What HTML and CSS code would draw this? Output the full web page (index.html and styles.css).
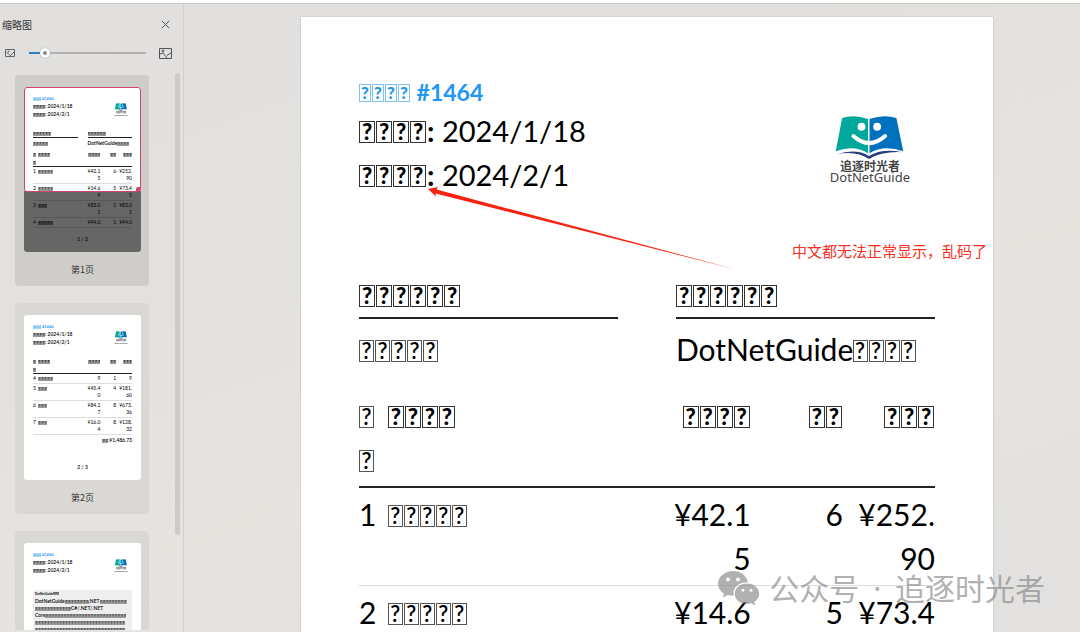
FILE: index.html
```html
<!DOCTYPE html>
<html lang="zh-CN">
<head>
  <meta charset="UTF-8">
  <meta name="viewport" content="width=device-width, initial-scale=1.0">
  <title>缩略图</title>
  <link rel="stylesheet" href="styles.css">
</head>
<body>

<svg class="defs" aria-hidden="true">
  <symbol id="book" viewBox="0 0 72 46">
    <path d="M7.500 3Q20-1 34 4V39Q20 30 1 37Z" fill="#00a79b"/>
    <path d="M35.500 4Q50-1 63 3L70 37Q50 30 35.500 39Z" fill="#0071bf"/>
    <circle cx="27.300" cy="12" r="4" fill="#fff"/>
    <circle cx="43.300" cy="12" r="4" fill="#fff"/>
    <path d="M19 21.500Q35 36 51.500 21.500" fill="none" stroke="#fff" stroke-width="4" stroke-linecap="round"/>
    <path d="M2 40Q22 34 35 42Q48 34 69 38Q48 37 35 45Q22 36 2 40Z" fill="#27407c"/>
  </symbol>
</svg>

<div class="viewer">
  <aside class="panel">
    <div class="panel-title">
      <span>缩略图</span>
      <button class="close" aria-label="关闭">
        <svg width="9" height="9" viewBox="0 0 9 9"><path d="M.8.8l7.400 7.400M8.200.8L.8 8.200" stroke="#555" fill="none"/></svg>
      </button>
    </div>
    <div class="zoom-bar">
      <svg width="10" height="8" viewBox="0 0 10 8" fill="none" stroke="#666"><path d="M.5.5h9v7h-9zM1.500 3.500L6 7M6 6l3-3"/><circle cx="3.500" cy="2.500" r=".5"/></svg>
      <input type="range" min="0" max="100" value="10" aria-label="缩放">
      <svg width="13" height="11" viewBox="0 0 13 11" fill="none" stroke="#555"><path d="M.5.5h12v10h-12zM1 6l3-1 4 5M8 7.500l4.500-3"/><circle cx="4" cy="3" r="1"/></svg>
    </div>

    <div class="thumbs">
      <div class="card active">
        <div class="sheet mini">
          <div class="head">
            <div>
              <div class="title"><span class="tofu">????</span> #1464</div>
              <div class="date"><b><span class="tofu">????</span>:</b> 2024/1/18</div>
              <div class="date"><b><span class="tofu">????</span>:</b> 2024/2/1</div>
            </div>
            <div class="logo"><svg><use href="#book"/></svg><span class="cn">追逐时光者</span><span class="en">DotNetGuide</span></div>
          </div>
          <div class="parties">
            <div><div class="party"><b class="tofu">??????</b></div><div class="name"><span class="tofu">?????</span></div></div>
            <div><div class="party"><b class="tofu">??????</b></div><div class="name">DotNetGuide<span class="tofu">????</span></div></div>
          </div>
          <table>
            <thead>
              <tr><th class="no"><span class="tofu">?</span><br><span class="tofu">?</span></th><th><b class="tofu">????</b></th><th class="num"><b class="tofu">????</b></th><th class="num"><b class="tofu">??</b></th><th class="num"><b class="tofu">???</b></th></tr>
            </thead>
            <tbody>
              <tr><td>1</td><td><span class="tofu">?????</span></td><td class="num">¥42.1<br>5</td><td class="num">6</td><td class="num">¥252.<br>90</td></tr>
              <tr><td>2</td><td><span class="tofu">?????</span></td><td class="num">¥14.6<br>9</td><td class="num">5</td><td class="num">¥73.4<br>5</td></tr>
              <tr><td>3</td><td><span class="tofu">???</span></td><td class="num">¥83.0<br>1</td><td class="num">1</td><td class="num">¥83.0<br>1</td></tr>
              <tr><td>4</td><td><span class="tofu">?????</span></td><td class="num">¥94.0</td><td class="num">1</td><td class="num">¥94.0</td></tr>
            </tbody>
          </table>
          <div class="page-no">1 / 3</div>
          <div class="shade"></div>
          <div class="view-box"></div>
        </div>
        <a class="label" href="#p1">第1页</a>
      </div>

      <div class="card">
        <div class="sheet mini">
          <div class="head">
            <div>
              <div class="title"><span class="tofu">????</span> #1464</div>
              <div class="date"><b><span class="tofu">????</span>:</b> 2024/1/18</div>
              <div class="date"><b><span class="tofu">????</span>:</b> 2024/2/1</div>
            </div>
            <div class="logo"><svg><use href="#book"/></svg><span class="cn">追逐时光者</span><span class="en">DotNetGuide</span></div>
          </div>
          <table class="next">
            <thead>
              <tr><th class="no"><span class="tofu">?</span><br><span class="tofu">?</span></th><th><b class="tofu">????</b></th><th class="num"><b class="tofu">????</b></th><th class="num"><b class="tofu">??</b></th><th class="num"><b class="tofu">???</b></th></tr>
            </thead>
            <tbody>
              <tr><td>4</td><td><span class="tofu">?????</span></td><td class="num">9</td><td class="num">1</td><td class="num">9</td></tr>
              <tr><td>5</td><td><span class="tofu">???</span></td><td class="num">¥45.4<br>0</td><td class="num">4</td><td class="num">¥181.<br>60</td></tr>
              <tr><td>6</td><td><span class="tofu">???</span></td><td class="num">¥84.1<br>7</td><td class="num">8</td><td class="num">¥673.<br>36</td></tr>
              <tr><td>7</td><td><span class="tofu">???</span></td><td class="num">¥16.0<br>4</td><td class="num">8</td><td class="num">¥128.<br>32</td></tr>
            </tbody>
          </table>
          <div class="total"><span class="tofu">??</span>:¥1,486.73</div>
          <div class="page-no">2 / 3</div>
        </div>
        <a class="label" href="#p2">第2页</a>
      </div>

      <div class="card">
        <div class="sheet mini">
          <div class="head">
            <div>
              <div class="title"><span class="tofu">????</span> #1464</div>
              <div class="date"><b><span class="tofu">????</span>:</b> 2024/1/18</div>
              <div class="date"><b><span class="tofu">????</span>:</b> 2024/2/1</div>
            </div>
            <div class="logo"><svg><use href="#book"/></svg><span class="cn">追逐时光者</span><span class="en">DotNetGuide</span></div>
          </div>
          <div class="comments">
            <div class="comments-title">DotNetGuide<span class="tofu">???</span></div>
            <div>DotNetGuide<span class="tofu">????????</span>.NET<span class="tofu">?????????</span></div>
            <div><span class="tofu">????????????</span>C#/.NET/.NET</div>
            <div>Core<span class="tofu">???????????????????????????</span></div>
            <div><span class="tofu">??????????????????????????????</span></div>
            <div><span class="tofu">??????????????????????????????</span></div>
          </div>
        </div>
      </div>
    </div>
    <div class="scroll"></div>
  </aside>

  <main class="stage">
    <article class="sheet" id="p1">
      <div class="head">
        <div>
          <div class="title"><span class="tofu">????</span> #1464</div>
          <div class="date"><b><span class="tofu">????</span>:</b> 2024/1/18</div>
          <div class="date"><b><span class="tofu">????</span>:</b> 2024/2/1</div>
        </div>
        <div class="logo"><svg><use href="#book"/></svg><span class="cn">追逐时光者</span><span class="en">DotNetGuide</span></div>
      </div>
      <div class="parties">
        <div><div class="party"><b class="tofu">??????</b></div><div class="name"><span class="tofu">?????</span></div></div>
        <div><div class="party"><b class="tofu">??????</b></div><div class="name">DotNetGuide<span class="tofu">????</span></div></div>
      </div>
      <table>
        <thead>
          <tr><th class="no"><span class="tofu">?</span><br><span class="tofu">?</span></th><th><b class="tofu">????</b></th><th class="num"><b class="tofu">????</b></th><th class="num"><b class="tofu">??</b></th><th class="num"><b class="tofu">???</b></th></tr>
        </thead>
        <tbody>
          <tr><td>1</td><td><span class="tofu">?????</span></td><td class="num">¥42.1<br>5</td><td class="num">6</td><td class="num">¥252.<br>90</td></tr>
          <tr><td>2</td><td><span class="tofu">?????</span></td><td class="num">¥14.6</td><td class="num">5</td><td class="num">¥73.4</td></tr>
        </tbody>
      </table>
    </article>

    <svg class="arrow" width="308" height="84" viewBox="0 0 308 84">
      <path d="M0 2L10 0 8.500 2.500 308 82.500 7.500 6.500 8 9.500Z" fill="#f9210f"/>
    </svg>
    <div class="note">中文都无法正常显示，乱码了</div>
    <div class="watermark">
      <svg width="42" height="34" viewBox="0 0 42 34">
        <path fill="currentColor" fill-rule="evenodd" d="M15.500 0C7 0 0 5.600 0 12.700c0 4 2.200 7.500 5.900 9.900L4.800 26.500l5-2.600c1.800.5 4 .9 6 .8C14 17.500 20 11.200 30 11.300 28.500 4.500 22.500 0 15.500 0ZM10 6.500a2 2 0 1 1 0 4 2 2 0 0 1 0-4Zm10 0a2 2 0 1 1 0 4 2 2 0 0 1 0-4Z"/>
        <path fill="currentColor" fill-rule="evenodd" d="M29 12.500c-7 0-12.300 4.600-12.300 10.200S22 32.900 29 32.900c1.500 0 3-.2 4.300-.6l4 2.200-1.100-3.600c3-1.900 5-4.800 5-8.200 0-5.600-5.200-10.200-12.200-10.200Zm-4 5.200a1.500 1.500 0 1 1 0 3 1.500 1.500 0 0 1 0-3Zm8 0a1.500 1.500 0 1 1 0 3 1.500 1.500 0 0 1 0-3Z"/>
      </svg>
      <div>公众号<span class="dot"> · </span>追逐时光者</div>
    </div>
  </main>
</div>

<script src="script.js"></script>
</body>
</html>
```

FILE: styles.css
```css
* {
  box-sizing: border-box;
}

body {
  margin: 0;
  height: 100vh;
  overflow: hidden;
  font-family: "Noto Sans", "Noto Sans CJK SC", sans-serif;
  color: #333;
  background: linear-gradient(160deg, #e1e0df 0%, #e3e1de 35%, #e7e3df 60%, #e2e1e0 100%);
  border-top: 3px solid #fff;
}

.defs {
  position: absolute;
  width: 0;
  height: 0;
}

.viewer {
  display: flex;
  height: 100%;
  border-top: 1px solid #c9c9c8;
}

/* panel de miniaturas */
.panel {
  position: relative;
  flex: none;
  width: 184px;
  display: flex;
  flex-direction: column;
  border-right: 1px solid #d3d1cf;
}

.panel-title {
  display: flex;
  justify-content: space-between;
  align-items: center;
  height: 40px;
  padding: 0 12px 0 2px;
  font-family: "Noto Sans CJK SC", sans-serif;
  font-size: 10px;
}

.close {
  display: flex;
  padding: 1px;
  border: none;
  background: none;
}

.zoom-bar {
  display: flex;
  align-items: center;
  height: 18px;
  padding: 0 11px 0 5px;
}

.zoom-bar input {
  -webkit-appearance: none;
  appearance: none;
  flex: 1;
  min-width: 0;
  height: 2px;
  margin: 0 13px 0 14px;
  background: linear-gradient(to right, #2a7dc0 14%, #b3b2b0 14%);
}

.zoom-bar input::-webkit-slider-thumb {
  -webkit-appearance: none;
  width: 10px;
  height: 10px;
  border: 3px solid #fff;
  border-radius: 50%;
  background: #8c8c8c;
  box-shadow: 0 0 1px #777;
}

.thumbs {
  flex: 1;
  display: flex;
  flex-direction: column;
  gap: 17px;
  overflow: hidden;
  margin: 13px 34px 2px 15px;
}

.card {
  flex: none;
  display: flex;
  flex-direction: column;
  padding: 12px 8px 8px 9px;
  border-radius: 4px;
  background: #dad8d5;
}

.card.active {
  background: #cfcdca;
}

.label {
  padding-top: 9px;
  font-family: "Noto Sans CJK SC", sans-serif;
  font-size: 9px;
  line-height: 17px;
  text-align: center;
  text-decoration: none;
  color: #333;
}

.scroll {
  position: absolute;
  top: 69px;
  right: 3px;
  width: 5px;
  height: 462px;
  border-radius: 3px;
  background: #cdcbc9;
}

/* documento */
.stage {
  position: relative;
  flex: 1;
  overflow: hidden;
  padding: 13px 87px 0 117px;
}

.sheet {
  min-height: 100%;
  padding: 58px;
  background: #fff;
  box-shadow: 0 0 2px #bbb;
  font-family: Lato, sans-serif;
  font-size: 30px;
  line-height: 44px;
  color: #000;
}

.head {
  display: flex;
  justify-content: space-between;
}

.title {
  font-size: 23px;
  font-weight: bold;
  line-height: 34px;
  color: #2196f3;
}

.date {
  font-size: 29px;
}

.logo {
  display: flex;
  flex-direction: column;
  align-items: center;
  margin: 40px 25px 0 0;
  font-family: "Noto Sans", sans-serif;
  font-size: 13px;
  line-height: 12px;
  color: #444;
}

.logo svg {
  width: 72px;
  height: 45px;
}

.logo .cn {
  font-family: "Noto Sans CJK SC", sans-serif;
  font-size: 12px;
  font-weight: bold;
  line-height: 11px;
}

.tofu i {
  display: inline-block;
  width: 15px;
  height: 22px;
  margin-right: 1px;
  border: 1px solid #555;
  font-size: 22px;
  font-style: normal;
  font-weight: 600;
  line-height: 20px;
  text-align: center;
  vertical-align: 2px;
}

b .tofu i,
b.tofu i {
  width: 16px;
  border-color: #333;
  font-weight: 900;
}

.title .tofu i {
  width: 12px;
  height: 18px;
  border-color: #7cc0f8;
  font-size: 17px;
  font-weight: 900;
  line-height: 16px;
  vertical-align: 2px;
}

.parties {
  display: grid;
  grid-template-columns: 1fr 1fr;
  gap: 58px;
  margin-top: 75px;
}

.party {
  padding-bottom: 1px;
  border-bottom: 2px solid #222;
}

.name {
  margin-top: 8px;
}

table {
  width: 100%;
  margin-top: 22px;
  table-layout: fixed;
  border-collapse: collapse;
}

th,
td {
  padding: 4px 0 5px;
  border-bottom: 1px solid #ddd;
  font-weight: normal;
  text-align: left;
  vertical-align: top;
}

th {
  padding: 0 0 5px;
  border-bottom: 2px solid #222;
}

th.no {
  width: 5%;
}

th.num {
  width: 16%;
}

.num {
  text-align: right;
}

/* hojas en miniatura */
.mini {
  position: relative;
  display: flex;
  flex-direction: column;
  height: 165px;
  min-height: 0;
  padding: 9px;
  border-radius: 3px;
  box-shadow: none;
  font-size: 5px;
  font-weight: 600;
  line-height: 8px;
}

.mini .title {
  font-size: 4px;
  line-height: 6px;
}

.mini .date {
  font-size: 5px;
}

.mini .logo {
  margin: 7px 4px 0 0;
  font-size: 2px;
  line-height: 3px;
}

.mini .logo svg {
  width: 14px;
  height: 8px;
}

.mini .logo .cn {
  font-size: 2px;
  line-height: 3px;
}

.mini .tofu i {
  width: 3px;
  height: 4px;
  margin: 0;
  border: none;
  background: #999;
  font-size: 4px;
  line-height: 4px;
  vertical-align: 0;
}

.mini .title .tofu i {
  width: 2px;
  height: 3px;
  background: #a6d5fa;
  font-size: 3px;
  line-height: 3px;
}

.mini .parties {
  gap: 10px;
  margin-top: 12px;
}

.mini .party,
.mini .name {
  line-height: 7px;
}

.mini .party {
  padding: 0;
  border-bottom-width: 1px;
}

.mini .name {
  margin-top: 2px;
}

.mini table {
  margin-top: 3px;
}

.mini table.next {
  margin-top: 11px;
}

.mini td {
  padding: 1px 0;
  line-height: 7px;
}

.mini th {
  padding: 0;
  border-bottom-width: 1px;
}

.total {
  margin-top: 1px;
  text-align: right;
}

.page-no {
  margin-top: auto;
  text-align: center;
}

.comments {
  margin-top: 16px;
  padding: 1px 2px;
  background: #eee;
  line-height: 7px;
  white-space: nowrap;
}

.comments-title {
  font-size: 3px;
  font-weight: bold;
}

.mini .comments-title .tofu i {
  width: 2px;
  height: 3px;
}

.shade {
  position: absolute;
  inset: 104px 0 0;
  border-radius: 0 0 3px 3px;
  background: rgba(0, 0, 0, 0.6);
}

.view-box {
  position: absolute;
  inset: 0 0 60px;
  border: 1px solid #d04468;
  border-radius: 3px;
}

.view-box::after {
  content: "";
  position: absolute;
  right: 0;
  bottom: 0;
  width: 4px;
  height: 4px;
  border-radius: 2px 0 0;
  background: #d04468;
}

/* anotaciones */
.arrow {
  position: absolute;
  top: 183px;
  left: 244px;
}

.note {
  position: absolute;
  top: 236px;
  right: 93px;
  font-family: "Noto Sans CJK SC", sans-serif;
  font-size: 15px;
  line-height: 22px;
  color: #f9301f;
}

.watermark {
  position: absolute;
  top: 561px;
  right: 35px;
  display: flex;
  align-items: center;
  gap: 9px;
  font-family: "Noto Sans CJK SC", sans-serif;
  font-size: 30px;
  line-height: 44px;
  color: #888;
  opacity: 0.65;
}

.dot {
  margin: 0 6px;
  font-family: "Noto Sans", sans-serif;
}
```

FILE: script.js
```js
// cada signo va dentro de su propio recuadro
document.querySelectorAll('.tofu').forEach(function (el) {
  var text = el.textContent;
  el.textContent = '';
  for (var i = 0; i < text.length; i++) {
    var box = document.createElement('i');
    box.textContent = text[i];
    el.appendChild(box);
  }
});
```
